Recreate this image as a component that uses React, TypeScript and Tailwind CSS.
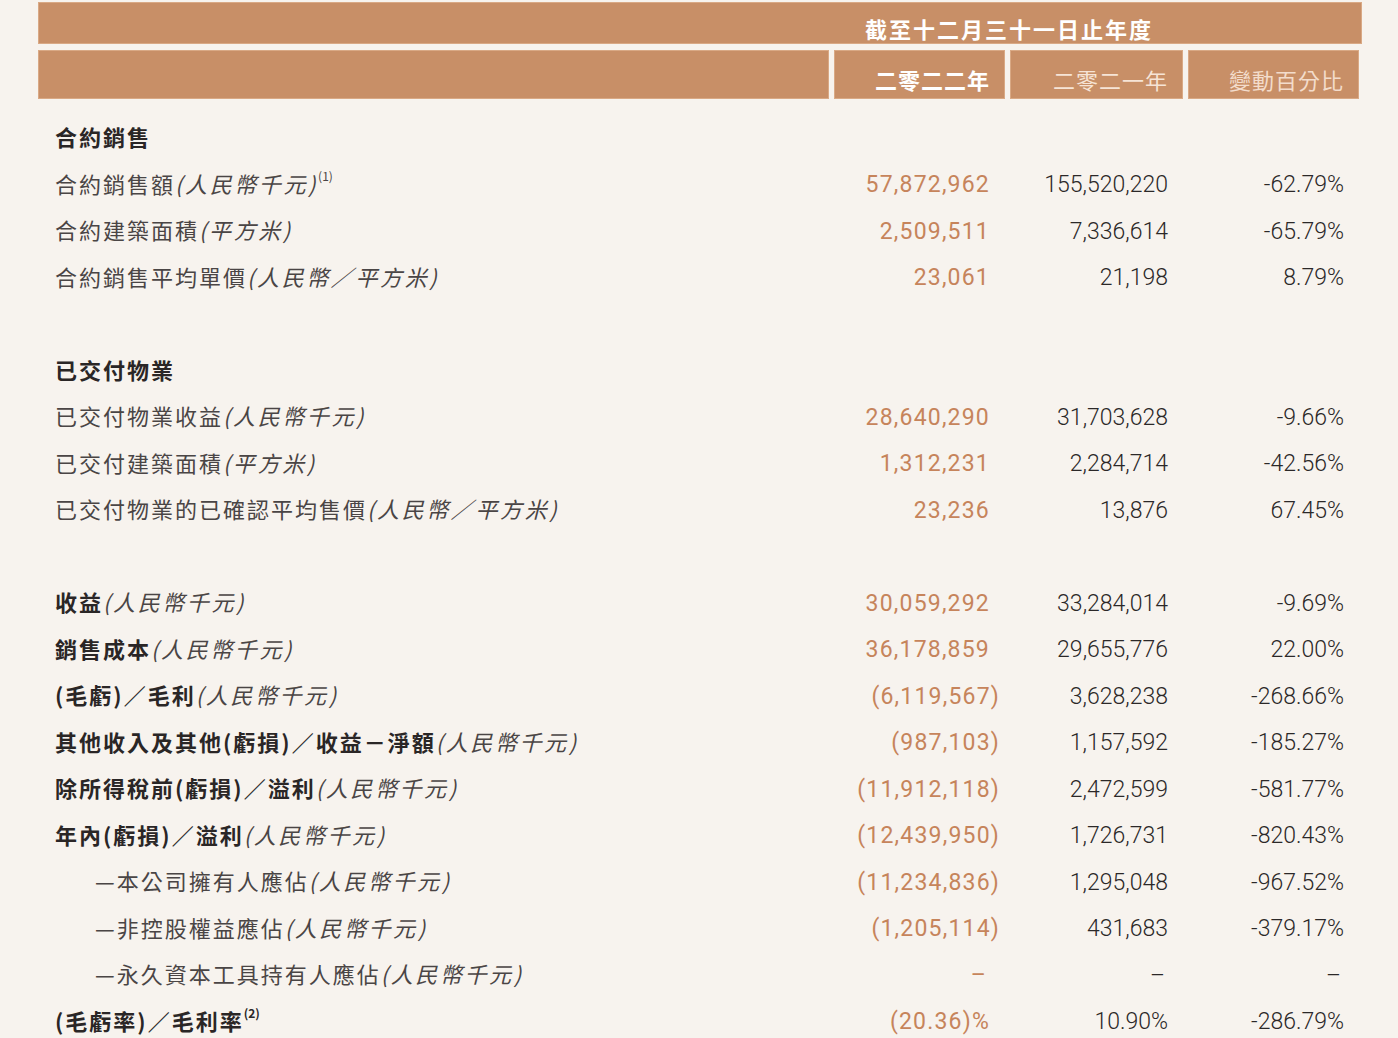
import type { ReactNode } from 'react';

type Row =
  | { kind: 'spacer' }
  | {
      kind: 'row'
      label: string
      unit?: string
      sup?: string
      bold?: boolean
      heading?: boolean
      indent?: boolean
      v1?: string
      v2?: string
      v3?: string
    }

const rows: Row[] = [
  { kind: 'row', label: '合約銷售', heading: true, bold: true },
  { kind: 'row', label: '合約銷售額', unit: '(人民幣千元)', sup: '(1)', v1: '57,872,962', v2: '155,520,220', v3: '-62.79%' },
  { kind: 'row', label: '合約建築面積', unit: '(平方米)', v1: '2,509,511', v2: '7,336,614', v3: '-65.79%' },
  { kind: 'row', label: '合約銷售平均單價', unit: '(人民幣／平方米)', v1: '23,061', v2: '21,198', v3: '8.79%' },
  { kind: 'spacer' },
  { kind: 'row', label: '已交付物業', heading: true, bold: true },
  { kind: 'row', label: '已交付物業收益', unit: '(人民幣千元)', v1: '28,640,290', v2: '31,703,628', v3: '-9.66%' },
  { kind: 'row', label: '已交付建築面積', unit: '(平方米)', v1: '1,312,231', v2: '2,284,714', v3: '-42.56%' },
  { kind: 'row', label: '已交付物業的已確認平均售價', unit: '(人民幣／平方米)', v1: '23,236', v2: '13,876', v3: '67.45%' },
  { kind: 'spacer' },
  { kind: 'row', label: '收益', unit: '(人民幣千元)', bold: true, v1: '30,059,292', v2: '33,284,014', v3: '-9.69%' },
  { kind: 'row', label: '銷售成本', unit: '(人民幣千元)', bold: true, v1: '36,178,859', v2: '29,655,776', v3: '22.00%' },
  { kind: 'row', label: '(毛虧)／毛利', unit: '(人民幣千元)', bold: true, v1: '(6,119,567)', v2: '3,628,238', v3: '-268.66%' },
  { kind: 'row', label: '其他收入及其他(虧損)／收益－淨額', unit: '(人民幣千元)', bold: true, v1: '(987,103)', v2: '1,157,592', v3: '-185.27%' },
  { kind: 'row', label: '除所得稅前(虧損)／溢利', unit: '(人民幣千元)', bold: true, v1: '(11,912,118)', v2: '2,472,599', v3: '-581.77%' },
  { kind: 'row', label: '年內(虧損)／溢利', unit: '(人民幣千元)', bold: true, v1: '(12,439,950)', v2: '1,726,731', v3: '-820.43%' },
  { kind: 'row', label: '—本公司擁有人應佔', unit: '(人民幣千元)', indent: true, v1: '(11,234,836)', v2: '1,295,048', v3: '-967.52%' },
  { kind: 'row', label: '—非控股權益應佔', unit: '(人民幣千元)', indent: true, v1: '(1,205,114)', v2: '431,683', v3: '-379.17%' },
  { kind: 'row', label: '—永久資本工具持有人應佔', unit: '(人民幣千元)', indent: true, v1: '–', v2: '–', v3: '–' },
  { kind: 'row', label: '(毛虧率)／毛利率', sup: '(2)', bold: true, v1: '(20.36)%', v2: '10.90%', v3: '-286.79%' },
]

const cjk = '[font-family:"Noto_Sans_CJK_TC","Noto_Sans",sans-serif]'
const num = '[font-family:Roboto,"Noto_Sans",sans-serif]'

function Cell({ children, className = '' }: { children?: ReactNode; className?: string }) {
  return <div className={`flex h-[46.5px] items-center justify-end pt-[3px] pr-[15px] ${className}`}>{children}</div>
}

export default function App() {
  return (
    <div className="min-h-screen w-full bg-[#f7f3ee] pt-[2px] pl-[38px]">
      <div className="w-[1324px]">
        {/* header */}
        <div className={`flex h-[42px] items-end justify-end border border-[#d9a985] bg-[#c88f67] pr-[208px] ${cjk}`}>
          <span className="text-[22px] leading-[30px] font-bold tracking-[2px] text-white">截至十二月三十一日止年度</span>
        </div>
        <div className={`mt-[6px] grid h-[49px] grid-cols-[791px_171px_173px_171px] gap-x-[5px] ${cjk}`}>
          <div className="border border-[#d9a985] bg-[#c88f67]" />
          <div className="flex items-end justify-end border border-[#d9a985] bg-[#c88f67] pr-[14px] pb-[4px]">
            <span className="text-[22px] leading-[30px] font-bold tracking-[1px] text-white">二零二二年</span>
          </div>
          <div className="flex items-end justify-end border border-[#d9a985] bg-[#c88f67] pr-[14px] pb-[4px]">
            <span className="text-[22px] leading-[30px] tracking-[1px] text-[#f6e4d6]">二零二一年</span>
          </div>
          <div className="flex items-end justify-end border border-[#d9a985] bg-[#c88f67] pr-[14px] pb-[4px]">
            <span className="text-[22px] leading-[30px] tracking-[1px] text-[#f3dccb]">變動百分比</span>
          </div>
        </div>

        {/* body */}
        <div className="grid grid-cols-[791px_171px_173px_171px] gap-x-[5px] pt-[15px]">
          {rows.map((r, i) => {
            if (r.kind === 'spacer') {
              return <div key={i} className="col-span-4 h-[46.5px]" />
            }
            const hang = r.v1 && r.v1.endsWith(')')
            return (
              <div key={i} className="contents">
                <div className={`flex h-[46.5px] items-center pb-[1px] ${r.indent ? 'pl-[57px]' : 'pl-[17px]'} ${cjk} text-[22px] tracking-[2px] whitespace-nowrap`}>
                  <span className={r.bold ? 'font-bold text-[#2a2626]' : 'text-[#4a4545]'}>{r.label}</span>
                  {r.unit && <span className="italic tracking-[2.6px] text-[#4a4545]">{r.unit}</span>}
                  {r.sup && (
                    <span className={`relative -top-[7px] text-[12px] tracking-normal ${r.bold ? 'font-bold text-[#2a2626]' : 'text-[#4a4545]'}`}>{r.sup}</span>
                  )}
                </div>
                <Cell className={`${num} text-[23px] tracking-[1.2px] text-[#c6845b]`}>
                  {r.v1 && <span className={hang ? '-mr-[10px]' : r.v1 === '–' ? 'mr-[3px]' : ''}>{r.v1}</span>}
                </Cell>
                <Cell className={`${num} text-[23px] font-light text-[#2b2828]`}>
                  {r.v2 && <span className={r.v2 === '–' ? 'mr-[3px]' : ''}>{r.v2}</span>}
                </Cell>
                <Cell className={`${num} text-[23px] font-light text-[#2b2828]`}>
                  {r.v3 && <span className={r.v3 === '–' ? 'mr-[3px]' : ''}>{r.v3}</span>}
                </Cell>
              </div>
            )
          })}
        </div>
      </div>
    </div>
  )
}
